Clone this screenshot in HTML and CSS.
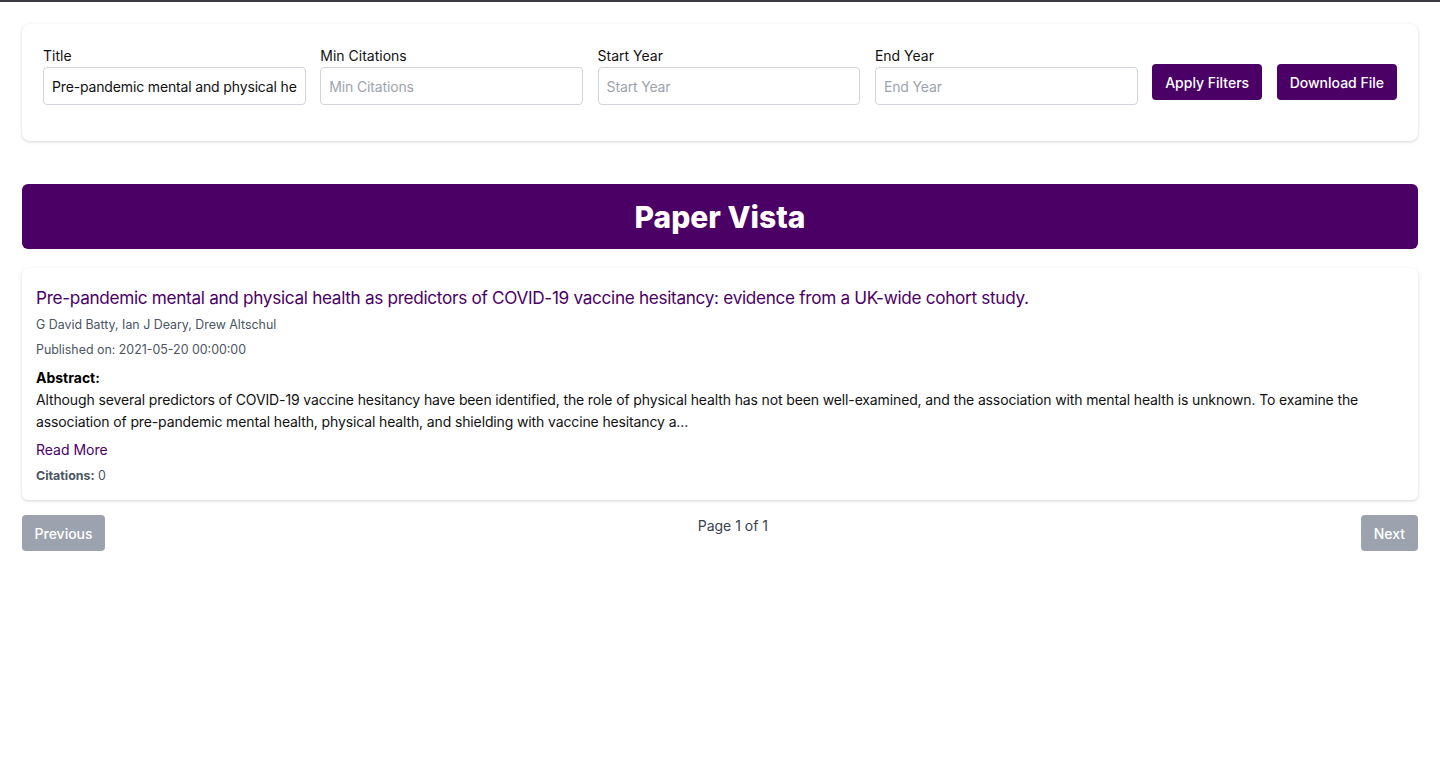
FILE: index.html
```html
<!DOCTYPE html>
<html lang="en">
<head>
<meta charset="utf-8">
<title>Paper Vista</title>
<link rel="stylesheet" href="styles.css">
</head>
<body>
<div class="topline"></div>
<main class="page">
  <section class="filters">
    <div class="field">
      <label class="label">Title</label>
      <input class="input" type="text" value="Pre-pandemic mental and physical health as predictors of COVID-19 vaccine hesitancy" placeholder="Title">
    </div>
    <div class="field">
      <label class="label">Min Citations</label>
      <input class="input" type="text" placeholder="Min Citations">
    </div>
    <div class="field">
      <label class="label">Start Year</label>
      <input class="input" type="text" placeholder="Start Year">
    </div>
    <div class="field">
      <label class="label">End Year</label>
      <input class="input" type="text" placeholder="End Year">
    </div>
    <button class="btn btn-primary">Apply Filters</button>
    <button class="btn btn-primary">Download File</button>
  </section>

  <header class="banner">
    <h1 class="banner-title">Paper Vista</h1>
  </header>

  <article class="paper">
    <a class="paper-title" href="#">Pre-pandemic mental and physical health as predictors of COVID-19 vaccine hesitancy: evidence from a UK-wide cohort study.</a>
    <p class="meta authors">G David Batty, Ian J Deary, Drew Altschul</p>
    <p class="meta published">Published on: 2021-05-20 00:00:00</p>
    <p class="abstract-label">Abstract:</p>
    <p class="abstract">Although several predictors of COVID-19 vaccine hesitancy have been identified, the role of physical health has not been well-examined, and the association with mental health is unknown. To examine the association of pre-pandemic mental health, physical health, and shielding with vaccine hesitancy a...</p>
    <a class="read-more" href="#">Read More</a>
    <p class="citations"><strong>Citations:</strong> 0</p>
  </article>

  <nav class="pager">
    <button class="btn btn-disabled btn-prev">Previous</button>
    <span class="page-info">Page 1 of 1</span>
    <button class="btn btn-disabled">Next</button>
  </nav>
</main>
</body>
</html>
```

FILE: styles.css
```css
* { box-sizing: border-box; }

html, body {
  margin: 0;
  padding: 0;
  background: #ffffff;
}

body {
  font-family: Inter, "Liberation Sans", Arial, sans-serif;
  color: #000;
  -webkit-font-smoothing: antialiased;
}

.topline {
  height: 2px;
  background: #3a3a44;
}

.page {
  padding: 22px 22px 0 22px;
}

/* Filters card */
.filters {
  display: flex;
  align-items: flex-end;
  gap: 14.5px;
  background: #fff;
  border-radius: 8px;
  box-shadow: 0 1px 4px rgba(0, 0, 0, 0.12), 0 1px 2px rgba(0, 0, 0, 0.06);
  padding: 22px 21px 36px 21px;
}

.field {
  flex: 1 1 0;
  min-width: 0;
  display: flex;
  flex-direction: column;
  gap: 1px;
}

.label {
  font-size: 14px;
  line-height: 20px;
  color: #111;
}

.input {
  height: 38px;
  width: 100%;
  border: 1px solid #d1d5db;
  border-radius: 4px;
  padding: 0 8px;
  font-family: inherit;
  font-size: 14px;
  letter-spacing: -0.15px;
  color: #111;
  background: #fff;
  outline: none;
}

.input::placeholder {
  color: #9ca3af;
}

.btn {
  height: 36px;
  border: none;
  border-radius: 4px;
  padding: 0 13px;
  font-family: inherit;
  font-size: 14px;
  font-weight: 500;
  color: #fff;
  white-space: nowrap;
  cursor: pointer;
}

.btn-primary {
  background: #4b0066;
  margin-bottom: 5px;
  flex: none;
}

.btn-disabled {
  background: #9ca3af;
  cursor: not-allowed;
}

.btn-prev {
  padding: 0 12.5px;
}

/* Banner */
.banner {
  margin-top: 43px;
  height: 65px;
  background: #4b0066;
  border-radius: 6px;
  display: flex;
  align-items: center;
  justify-content: center;
}

.banner-title {
  margin: 0;
  color: #fff;
  font-size: 30px;
  font-weight: 800;
  line-height: 36px;
}

/* Paper card */
.paper {
  margin-top: 19px;
  background: #fff;
  border-radius: 6px;
  box-shadow: 0 1px 4px rgba(0, 0, 0, 0.12), 0 1px 2px rgba(0, 0, 0, 0.06);
  padding: 16px 14px 16px 14px;
  display: flex;
  flex-direction: column;
  align-items: flex-start;
}

.paper-title {
  color: #4b0066;
  font-size: 17.2px;
  letter-spacing: -0.32px;
  line-height: 28px;
  text-decoration: none;
}

.meta {
  margin: 0;
  font-size: 12.4px;
  line-height: 16px;
  color: #4b5563;
}

.authors { margin-top: 5px; }
.published { margin-top: 9px; }

.abstract-label {
  margin: 10px 0 0 0;
  font-size: 14px;
  line-height: 20px;
  font-weight: 700;
}

.abstract {
  margin: 1px 0 0 0;
  font-size: 14px;
  letter-spacing: -0.13px;
  line-height: 22px;
  color: #111;
}

.read-more {
  margin-top: 7px;
  font-size: 14px;
  line-height: 20px;
  color: #4b0066;
  text-decoration: none;
}

.citations {
  margin: 8px 0 0 0;
  font-size: 12.4px;
  line-height: 16px;
  color: #4b5563;
}

.citations strong { font-weight: 700; }

/* Pagination */
.pager {
  margin-top: 15px;
  display: flex;
  justify-content: space-between;
  align-items: flex-start;
}

.page-info {
  margin-top: 1px;
  font-size: 14px;
  line-height: 20px;
  color: #374151;
}
```
